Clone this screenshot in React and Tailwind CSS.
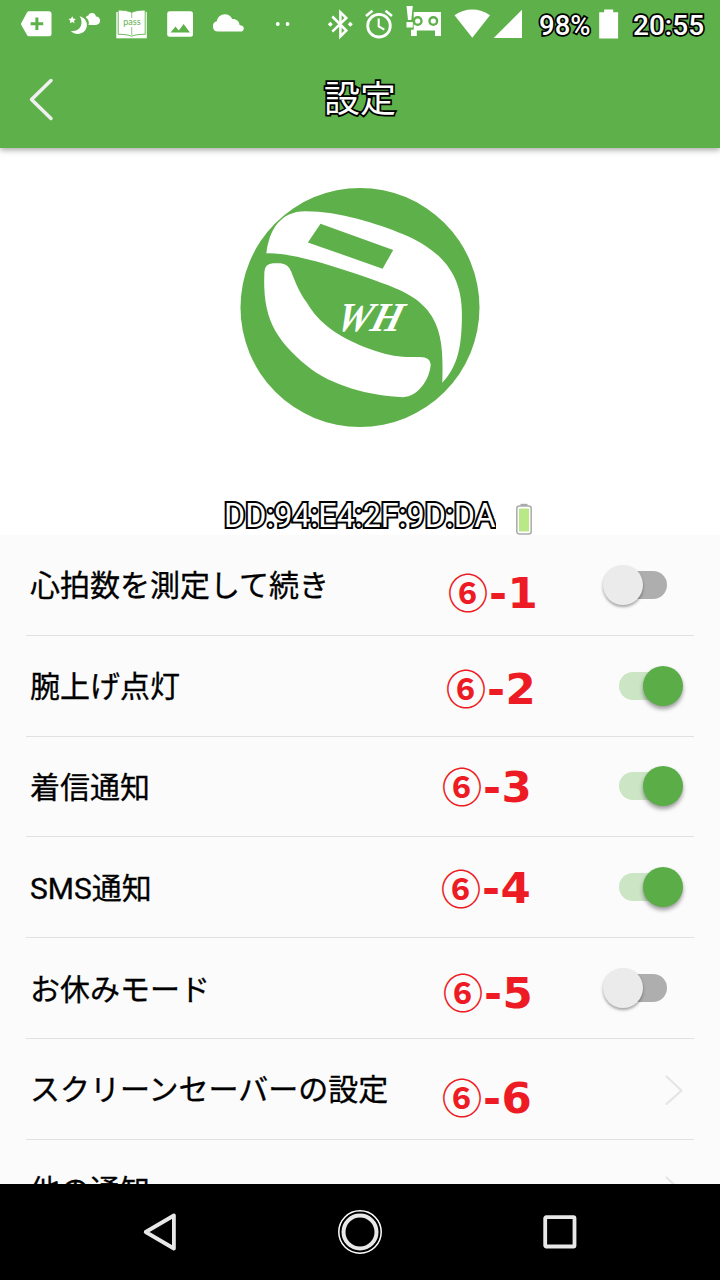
import React, { useState } from 'react';

const GREEN = '#5eb14a';

const OUTLINED = '[paint-order:stroke_fill] text-white [-webkit-text-stroke-color:#000]';

const initialRows = [
  { label: '心拍数を測定して続き', type: 'switch', on: false, mark: '1', markPos: 'left-[448px] top-[32px]' },
  { label: '腕上げ点灯', type: 'switch', on: true, mark: '2', markPos: 'left-[446px] top-[27px]' },
  { label: '着信通知', type: 'switch', on: true, mark: '3', markPos: 'left-[442px] top-[24px]' },
  { label: 'SMS通知', type: 'switch', on: true, mark: '4', markPos: 'left-[441px] top-[25px]' },
  { label: 'お休みモード', type: 'switch', on: false, mark: '5', markPos: 'left-[443px] top-[29px]' },
  { label: 'スクリーンセーバーの設定', type: 'link', mark: '6', markPos: 'left-[442px] top-[33px]' },
  { label: '他の通知', type: 'link' },
];

// Status bar glyphs share one coordinate space, x is where the cell starts
const StatusIcon = ({ x, w, children }) => (
  <svg width={w} height="48" viewBox={`${x} 0 ${w} 48`} fill="#fff" className="shrink-0">
    {children}
  </svg>
);

const StatusBar = () => (
  <div className="flex h-12 items-center pl-4 font-['Roboto',sans-serif]">
    <StatusIcon x={16} w={44}>
      <path d="M29 11.2h20a2.5 2.5 0 0 1 2.5 2.5v20a2.5 2.5 0 0 1-2.5 2.5H29q-1.3 0-2-1.200L21.300 25q-.6-1 0-2L27 12.400q.7-1.200 2-1.200z" />
      <path d="M36.900 17.500v12.600M30.600 23.800h12.600" stroke={GREEN} strokeWidth="3" />
    </StatusIcon>
    <StatusIcon x={60} w={48}>
      <path d="M72.200 16.200l1.100 2.400 2.600.3-1.900 1.800.5 2.600-2.300-1.300-2.300 1.300.5-2.600-1.900-1.800 2.600-.3z" />
      <path d="M79.500 16.300c6 1.300 9 7.200 6.700 12.200-2.400 5.700-10.500 7.600-15.400 2.400 4.400.8 8.300-1 9.900-4.600 1.500-3.400 1-7-1.200-10z" />
      <path d="M88.500 25c1-2.700-.1-5.600-2.700-7.400.3-1.300 1.300-1.900 2.400-1.900.8-2 2.400-2.900 4-2.600 2.100.2 3.500 1.600 3.800 3.400 2.500 0 4.100 1.900 4.100 4.100 0 2.500-1.800 4.400-4.300 4.400z" />
    </StatusIcon>
    <StatusIcon x={108} w={48}>
      <path d="M116.300 12h30.500v26.300h-30.500z" />
      <path d="M118.200 10c5.500 0 9.500.7 13.500 2.300 4-1.600 8-2.300 13.500-2.300v24.300c-5.500 0-9.500.3-13.500 1.900-4-1.600-8-1.900-13.500-1.900z" stroke={GREEN} strokeWidth=".9" />
      <path d="M131.700 12v6M131.700 27v8" stroke={GREEN} strokeWidth=".7" />
      <text x="131.900" y="25.200" fontSize="9" textAnchor="middle" fill={GREEN} fontFamily="Lato, sans-serif">pass</text>
    </StatusIcon>
    <StatusIcon x={156} w={48}>
      <rect x="167.200" y="11.200" width="25.800" height="25.600" rx="2.500" />
      <path d="M170.500 32.600l5-6.200 3.300 4 4.800-6.400 6.400 8.600z" fill={GREEN} />
    </StatusIcon>
    <StatusIcon x={204} w={48}>
      <path d="M218 31.600a5.300 5.300 0 0 1-1.200-10.400c.6-4 3.900-7 8-7 3.400 0 6.200 1.900 7.400 4.900 4.200-.3 7 2.200 7.300 5.800 2.500.3 4.300 1.400 4.300 3.500 0 2-1.400 3.200-3.300 3.200z" />
    </StatusIcon>
    <StatusIcon x={252} w={64}>
      <circle cx="277.800" cy="24" r="1.900" />
      <circle cx="287.600" cy="24" r="1.900" />
    </StatusIcon>
    <StatusIcon x={316} w={44}>
      <path d="M332.300 16.500l14 14-5.900 6V12.200l5.900 5.800-14 13.700" fill="none" stroke="#fff" strokeWidth="2.500" />
      <path d="M330.300 21.700l2.500 2.500-2.500 2.500-2.500-2.500zM350.300 21.700l2.500 2.500-2.500 2.500-2.500-2.500z" />
    </StatusIcon>
    <StatusIcon x={360} w={39}>
      <circle cx="379" cy="25.700" r="11.300" fill="none" stroke="#fff" strokeWidth="2.800" />
      <path d="M378.700 18.500v7.800l5.600 3.400" fill="none" stroke="#fff" strokeWidth="2.100" />
      <path d="M366 16l6.500-5.300M385.500 10.700l6.500 5.300" stroke="#fff" strokeWidth="2.600" />
    </StatusIcon>
    <StatusIcon x={399} w={49}>
      <path d="M413.700 12H441v24h-6v-5.500h-18.200V36H411v-6.200h2.700z" />
      <circle cx="417.700" cy="21" r="5" fill={GREEN} />
      <circle cx="417.700" cy="21" r="2.600" />
      <circle cx="433.300" cy="21" r="5" fill={GREEN} />
      <circle cx="433.300" cy="21" r="2.600" />
      <path d="M405.700 5h8l-1 8.500v15h-7z" fill={GREEN} />
      <path d="M406.500 6h6.300l-1.500 14h-3.300zM406.500 22h6.300v5.500h-6.300z" />
    </StatusIcon>
    <StatusIcon x={448} w={43}>
      <path d="M454.500 15.200c10.500-7.600 25-7.600 35.500 0l-17.700 22.500z" />
    </StatusIcon>
    <StatusIcon x={491} w={39}>
      <path d="M522 9.700V38h-28.300z" />
    </StatusIcon>
    <span className={`w-[66px] pl-[9px] pt-[3px] text-[27.5px] leading-none font-medium [-webkit-text-stroke-width:3.5px] ${OUTLINED}`}>98%</span>
    <StatusIcon x={596} w={28}>
      <path d="M599.200 12.200h5V9.500h9v2.700h4.900v26.400h-18.900z" />
    </StatusIcon>
    <span className={`pl-[9px] pt-[3px] text-[28px] leading-none font-medium [-webkit-text-stroke-width:3.5px] ${OUTLINED}`}>20:55</span>
  </div>
);

const Logo = () => (
  <svg width="240" height="240" viewBox="30 23 720 720">
    <circle cx="390" cy="383" r="360" fill={GREEN} />
    <path
      fill="#fff"
      d="M108 220C116 150 150 93 225 93C330 93 440 130 520 162C610 200 697 262 697 400C697 500 686 556 638 610C640 520 640 450 594 392C560 350 515 330 440 303C340 268 190 216 108 220Z"
    />
    <path d="M271 131L490 210L458 266L233 187Z" fill={GREEN} />
    <path
      fill="#fff"
      d="M102 275Q104 251 128 250H150Q173 251 183 275C197 312 208 338 228 366C250 402 270 425 310 454C370 495 470 532 530 532H570Q603 533 603 555C600 600 564 653 520 653C420 650 300 617 232 560C130 475 96 410 102 275Z"
    />
    <text
      transform="translate(312 453) skewX(-16)"
      fontFamily="Liberation Serif, serif"
      fontStyle="italic"
      fontWeight="700"
      fontSize="124"
      textLength="196"
      lengthAdjust="spacingAndGlyphs"
      fill="#fff"
    >
      WH
    </text>
  </svg>
);

const Switch = ({ on, onToggle }) => (
  <button
    onClick={onToggle}
    role="switch"
    aria-checked={on}
    className={`flex h-10 w-20 items-center ${on ? 'justify-end' : 'justify-start'}`}
  >
    <span className={`h-7 w-12 rounded-full ${on ? '-mr-6 bg-[#cbe5c5]' : 'order-2 -ml-6 bg-[#aeaeae]'}`} />
    <span
      className={`z-10 h-10 w-10 rounded-full ${
        on ? 'bg-[#5bad48] shadow-[0_3px_4px_rgba(0,0,0,0.38)]' : 'bg-[#ebebeb] shadow-[0_2px_3px_rgba(0,0,0,0.35)]'
      }`}
    />
  </button>
);

const Chevron = () => (
  <svg width="20" height="32" viewBox="0 0 20 32" fill="none" stroke="#e5e5e5" strokeWidth="2.200" strokeLinecap="round">
    <path d="M3.500 3.500L18.500 17.500L3.500 31" />
  </svg>
);

const Row = ({ row, onToggle }) => (
  <div className="relative h-[100.8px] shrink-0 px-[26px]">
    <div className="flex h-full items-center justify-between border-b border-[#e1e1e1] pl-1 pr-[11px]">
      <span className="pt-[3px] text-[30px] leading-none text-black [-webkit-text-stroke:0.3px_#000]">{row.label}</span>
      {row.type === 'switch' ? <Switch on={row.on} onToggle={onToggle} /> : <Chevron />}
    </div>
    {row.mark && (
      <div className={`absolute flex items-center leading-none font-bold text-[#ed1c24] ${row.markPos}`}>
        <span className="text-[40px] font-['Noto_Sans_CJK_JP',sans-serif]">⑥</span>
        <span className="pl-px pt-[5px] text-[43.5px] tracking-[0.5px] font-['DejaVu_Sans',sans-serif]">-{row.mark}</span>
      </div>
    )}
  </div>
);

const NavBar = () => (
  <div className="flex h-24 shrink-0 items-center justify-center gap-[156px] bg-black">
    <svg width="44" height="44" viewBox="0 0 44 44" fill="none" stroke="#e8e8e8" strokeWidth="3.800" strokeLinejoin="round">
      <path d="M36.200 5.500v33L8 22z" transform="translate(-.3 0)" />
    </svg>
    <svg width="44" height="44" viewBox="0 0 44 44" fill="none">
      <circle cx="22" cy="22" r="21.200" stroke="#fff" strokeWidth="1.500" />
      <circle cx="22" cy="22" r="16.500" stroke="#e8e8e8" strokeWidth="4" />
    </svg>
    <svg width="44" height="44" viewBox="0 0 44 44" fill="none" stroke="#e8e8e8" strokeWidth="3.800">
      <rect x="7.200" y="7.200" width="29.300" height="29.300" rx="1" />
    </svg>
  </div>
);

const App = () => {
  const [rows, setRows] = useState(initialRows);

  const toggleRow = (index) => {
    setRows((prev) => prev.map((r, i) => (i === index ? { ...r, on: !r.on } : r)));
  };

  return (
    <div className="flex h-[1280px] w-[720px] flex-col overflow-hidden bg-white font-['Roboto','Noto_Sans_CJK_JP',sans-serif]">
      <header className="z-10 h-[148px] shrink-0 bg-[#5eb14a] shadow-[0_2px_6px_rgba(0,0,0,0.35)]">
        <StatusBar />
        <div className="grid h-[100px] grid-cols-3 items-center">
          <button className="pl-[26px]" title="Back">
            <svg width="30" height="46" viewBox="0 0 30 46" fill="none" stroke="#f0f0f0" strokeWidth="3.500" strokeLinecap="round" strokeLinejoin="round">
              <path d="M25 5.500L5.500 24.500L25 43.500" />
            </svg>
          </button>
          <h1 className={`pt-[4px] text-center text-[36px] leading-none [-webkit-text-stroke-width:3.5px] ${OUTLINED}`}>設定</h1>
        </div>
      </header>

      <section className="flex h-[387px] shrink-0 flex-col items-center pt-10">
        <Logo />
        <div className="mt-[70px] flex items-center self-start pl-[224px]">
          <span className={`w-[272px] overflow-hidden whitespace-nowrap text-[32.3px] leading-[36px] [-webkit-text-stroke-width:4px] ${OUTLINED}`}>
            DD:94:E4:2F:9D:DA
          </span>
          <svg width="18" height="32" viewBox="0 0 18 32" className="ml-[19px] mt-[6px]">
            <path d="M5.500 .8h7v2.500h-7z" fill="#aaa" />
            <rect x="1.800" y="3" width="14.400" height="28" rx="2.500" fill="#fff" stroke="#aaa" strokeWidth="1.500" />
            <rect x="4" y="5.500" width="10" height="23" fill="#b8e986" />
          </svg>
        </div>
      </section>

      <main className="flex min-h-0 flex-1 flex-col overflow-hidden bg-[#fbfbfb]">
        {rows.map((row, i) => (
          <Row key={row.label} row={row} onToggle={() => toggleRow(i)} />
        ))}
      </main>

      <NavBar />
    </div>
  );
};

export default App;
